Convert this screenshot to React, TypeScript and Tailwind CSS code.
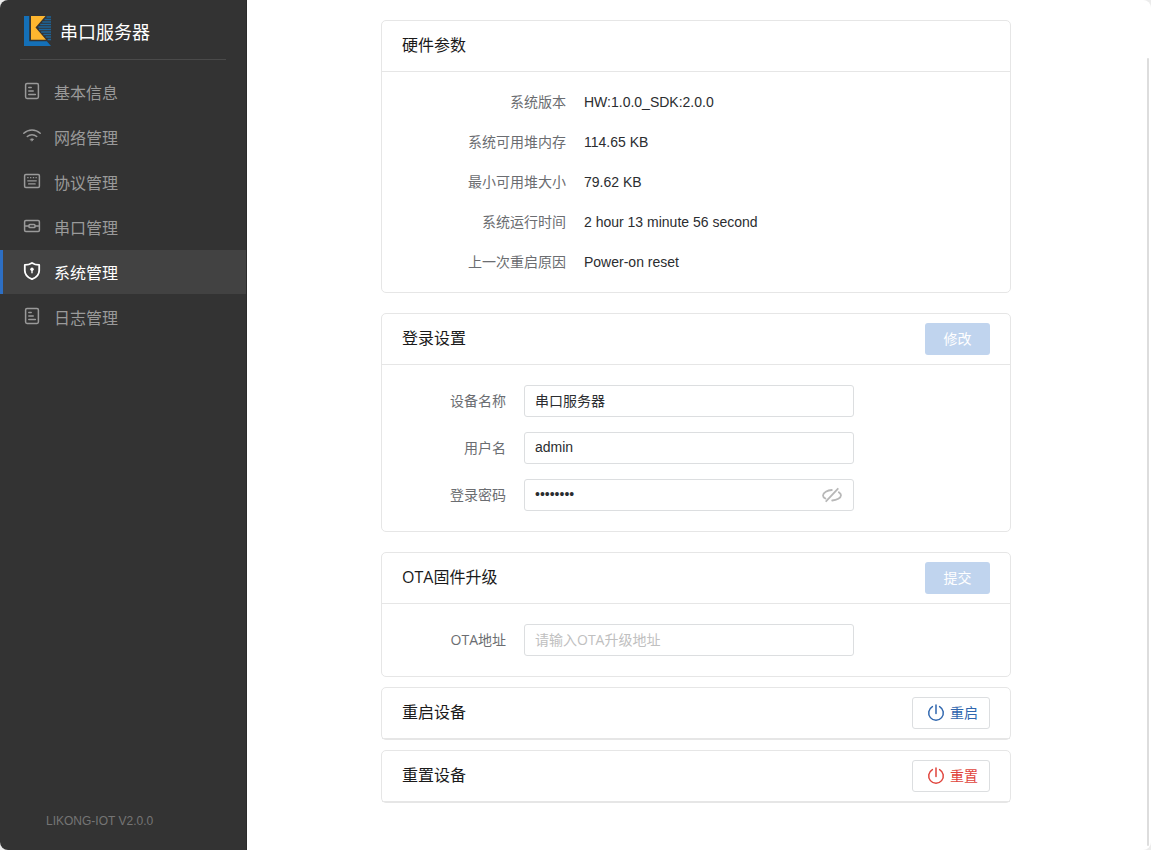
import { useState } from "react";
import type { ReactNode } from "react";

function NavSvg({ children }: { children: ReactNode }) {
  return (
    <svg
      className="mb-1 size-[18px] shrink-0"
      viewBox="0 0 18 18"
      fill="none"
      stroke="currentColor"
      strokeWidth="1.5"
      strokeLinecap="round"
      strokeLinejoin="round"
      aria-hidden="true"
    >
      {children}
    </svg>
  );
}

const DocIcon = () => (
  <NavSvg>
    <rect x="2.6" y="1.6" width="12.8" height="14.8" rx="1.4" />
    <path d="M5.8 5.5h2.4M5.8 9h4.4M5.8 12.5h6.6" />
  </NavSvg>
);

const WifiIcon = () => (
  <NavSvg>
    <path d="M.8 6.2C5.4 1.8 12.6 1.8 17.200 6.200M4.300 9.500c2.700-2.500 6.700-2.500 9.400 0" />
    <path d="M7.300 12.300c1-.8 2.400-.8 3.400 0L9 14Z" fill="currentColor" strokeWidth=".6" />
  </NavSvg>
);

const ProtocolIcon = () => (
  <NavSvg>
    <rect x="1.600" y="2.600" width="14.800" height="12.800" rx="1.200" />
    <path d="M4.700 5.700h.4M7.500 5.700h.4M10.300 5.700h.4M13 5.700h.3M4.700 8.800h8.600M5.600 11.900h6.600" strokeWidth="1.200" />
  </NavSvg>
);

const SerialIcon = () => (
  <NavSvg>
    <rect x="1.600" y="3.600" width="14.800" height="10.800" rx="1.200" />
    <rect x="6" y="7.500" width="6" height="3" rx=".8" />
    <path d="M2.500 9h3.200M12.300 9h3.200" />
  </NavSvg>
);

const ShieldIcon = () => (
  <NavSvg>
    <path
      d="M9 .9c2.300 1.500 4.600 2 7.200 2v5.600c0 4.100-2.700 6.900-7.200 8.700C4.500 15.400 1.800 12.600 1.800 8.500V2.900c2.600 0 4.900-.5 7.200-2Z"
      strokeWidth="1.800"
    />
    <circle cx="9" cy="7.200" r="1.700" fill="currentColor" stroke="none" />
    <path d="M9 7.500v3.200" strokeWidth="1.400" />
  </NavSvg>
);

const PowerIcon = () => (
  <svg
    className="size-[18px]"
    viewBox="0 0 18 18"
    fill="none"
    stroke="currentColor"
    strokeWidth="1.5"
    strokeLinecap="round"
    aria-hidden="true"
  >
    <path d="M5.400 2.600a7.300 7.300 0 1 0 7.200 0M9 .9v8.600" />
  </svg>
);

const EyeOffIcon = () => (
  <svg
    className="h-4 w-5"
    viewBox="0 0 20 16"
    fill="none"
    stroke="currentColor"
    strokeWidth="1.800"
    strokeLinecap="round"
    aria-hidden="true"
  >
    <path d="M15.800 1.800 4.200 14.200M9.800 3C5.500 3.200 1 5.600 1 8.400c0 1.200.9 2.300 2.400 3.200M16.800 5.200c1.400.9 2.200 1.900 2.200 3 0 2.700-4.300 5-8.800 5.300" />
  </svg>
);

const Logo = () => (
  <svg className="mb-0.5 h-[30px] w-[27px]" viewBox="0 0 27 30" aria-hidden="true">
    <path d="M0 0h5.200v25.200h17.600L27 30H0Z" fill="#1470b8" />
    <path d="M7 0h14.500l-10 11.500 10.500 12.200H7Z" fill="#fdb62f" />
    <path
      d="M22.500 1H27M20.500 3.500H27M18.300 6H27M16.200 8.500H27M14.400 11H27M15 13.500H27M17.200 16H27M19.400 18.500H27M21.600 21H27M23.600 23.500H27"
      stroke="#1c659c"
      strokeWidth="1.300"
    />
  </svg>
);

const navItems = [
  { label: "基本信息", Icon: DocIcon },
  { label: "网络管理", Icon: WifiIcon },
  { label: "协议管理", Icon: ProtocolIcon },
  { label: "串口管理", Icon: SerialIcon },
  { label: "系统管理", Icon: ShieldIcon, active: true },
  { label: "日志管理", Icon: DocIcon },
];

const hardware = [
  ["系统版本", "HW:1.0.0_SDK:2.0.0"],
  ["系统可用堆内存", "114.65 KB"],
  ["最小可用堆大小", "79.62 KB"],
  ["系统运行时间", "2 hour 13 minute 56 second"],
  ["上一次重启原因", "Power-on reset"],
];

function Card({ title, action, children }: { title: string; action?: ReactNode; children?: ReactNode }) {
  return (
    <section className="rounded-[5px] border border-[#e6e6e6] bg-white">
      <header className="flex h-[51px] items-center justify-between border-b border-[#e6e6e6] px-5">
        <h2 className="pb-0.5 text-base text-[#1a1a1a]">{title}</h2>
        {action}
      </header>
      {children}
    </section>
  );
}

function Field({ id, label, children }: { id: string; label: string; children: ReactNode }) {
  return (
    <div className="flex items-center gap-[18px]">
      <label htmlFor={id} className="w-[104px] shrink-0 text-right text-sm text-[#6b6d71]">
        {label}
      </label>
      {children}
    </div>
  );
}

const inputClass =
  "h-8 w-full rounded-[3px] border border-[#dcdee0] bg-white px-2.5 pb-0.5 text-sm text-[#2b2d30] outline-none placeholder:text-[#c0c0c0] focus:border-[#2d6fc4]";
const arial = "font-['Liberation_Sans','Noto_Sans_CJK_SC',sans-serif]";
const primaryButton = "h-8 w-[65px] rounded-[3px] bg-[#c0d4ee] text-sm text-white";
const outlineButton =
  "flex h-8 items-center gap-[5px] rounded-[3px] border border-[#dcdee0] bg-white pr-[11px] pl-3.5 text-sm";

export default function App() {
  const [name, setName] = useState("串口服务器");
  const [user, setUser] = useState("admin");
  const [password, setPassword] = useState("password");
  const [ota, setOta] = useState("");
  const [visible, setVisible] = useState(false);

  return (
    <div className="min-h-screen bg-[#ececec] font-['Open_Sans','Noto_Sans_CJK_SC',sans-serif]">
      <div className="flex min-h-screen overflow-hidden rounded-lg bg-white">
        <aside className="flex w-[247px] shrink-0 flex-col border-r border-[#2b2b2b] bg-[#333333]">
          <div className="mx-5 flex h-[60px] items-center gap-[9px] border-b border-[#4a4a4a] pt-1 pl-1">
            <Logo />
            <h1 className="text-lg text-white">串口服务器</h1>
          </div>
          <nav className="flex flex-col gap-px pt-2.5">
            {navItems.map(({ label, Icon, active }) => (
              <a
                key={label}
                href="#"
                aria-current={active ? "page" : undefined}
                className={
                  "flex h-11 items-center gap-[13px] border-l-[3px] pt-0.5 pl-5 text-base " +
                  (active
                    ? "border-[#2d6fc4] bg-[#424242] text-white"
                    : "border-transparent text-[#9a9a9a]")
                }
              >
                <Icon />
                <span>{label}</span>
              </a>
            ))}
          </nav>
          <p className="mt-auto pb-[19px] pl-[46px] font-['Liberation_Sans',sans-serif] text-xs leading-5 text-[#757575]">
            LIKONG-IOT V2.0.0
          </p>
        </aside>

        <main className="min-w-0 flex-1 py-5">
          <div className="mx-auto flex w-full max-w-[630px] flex-col gap-5">
            <Card title="硬件参数">
              <dl className="py-2.5">
                {hardware.map(([label, value]) => (
                  <div key={label} className="flex h-10 items-center gap-[18px] px-5 text-sm">
                    <dt className="w-[164px] shrink-0 text-right text-[#6b6d71]">{label}</dt>
                    <dd className="font-['Liberation_Sans',sans-serif] text-[#2b2d30]">{value}</dd>
                  </div>
                ))}
              </dl>
            </Card>

            <Card title="登录设置" action={<button className={primaryButton}>修改</button>}>
              <form className="flex flex-col gap-[15px] p-5" onSubmit={(e) => e.preventDefault()}>
                <Field id="name" label="设备名称">
                  <input
                    id="name"
                    className={`${inputClass} ${arial} max-w-[330px]`}
                    value={name}
                    onChange={(e) => setName(e.target.value)}
                  />
                </Field>
                <Field id="user" label="用户名">
                  <input
                    id="user"
                    className={`${inputClass} ${arial} max-w-[330px]`}
                    value={user}
                    onChange={(e) => setUser(e.target.value)}
                  />
                </Field>
                <Field id="password" label="登录密码">
                  <div className="relative w-full max-w-[330px]">
                    <input
                      id="password"
                      type={visible ? "text" : "password"}
                      className={`${inputClass} ${arial}`}
                      value={password}
                      onChange={(e) => setPassword(e.target.value)}
                    />
                    <button
                      type="button"
                      aria-label="显示密码"
                      onClick={() => setVisible(!visible)}
                      className="absolute top-2 right-3 text-[#b8b8b8]"
                    >
                      <EyeOffIcon />
                    </button>
                  </div>
                </Field>
              </form>
            </Card>

            <div className="flex flex-col gap-2.5">
              <Card title="OTA固件升级" action={<button className={primaryButton}>提交</button>}>
                <form className="p-5" onSubmit={(e) => e.preventDefault()}>
                  <Field id="ota" label="OTA地址">
                    <input
                      id="ota"
                      className={`${inputClass} max-w-[330px]`}
                      placeholder="请输入OTA升级地址"
                      value={ota}
                      onChange={(e) => setOta(e.target.value)}
                    />
                  </Field>
                </form>
              </Card>
              <Card
                title="重启设备"
                action={
                  <button className={`${outlineButton} text-[#2f66ae]`}>
                    <PowerIcon />
                    重启
                  </button>
                }
              />
              <Card
                title="重置设备"
                action={
                  <button className={`${outlineButton} text-[#e0443c]`}>
                    <PowerIcon />
                    重置
                  </button>
                }
              />
            </div>
          </div>
        </main>

        <div className="flex w-1.5 shrink-0 pt-[58px] pr-[2px] pb-1 pl-[2px]" aria-hidden="true">
          <div className="w-full rounded-full bg-[#dddddd]" />
        </div>
      </div>
    </div>
  );
}
